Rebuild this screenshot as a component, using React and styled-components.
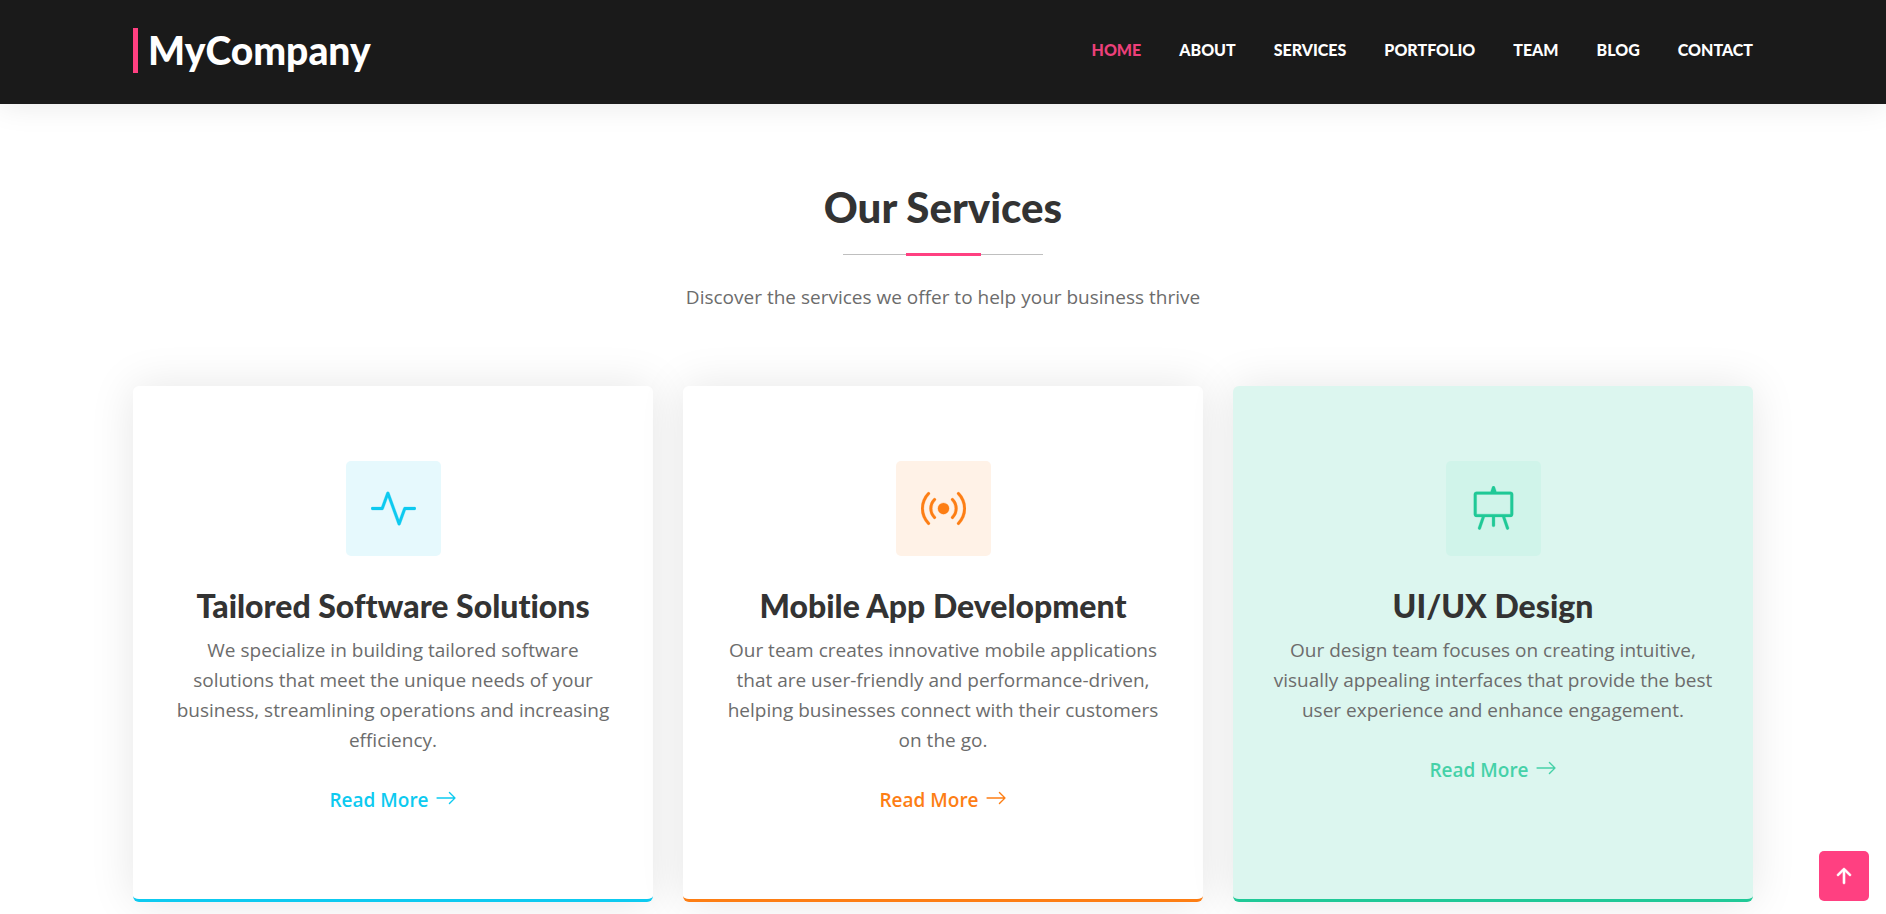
import React from "react"
import styled, { createGlobalStyle } from "styled-components"
import {
  BsActivity,
  BsArrowRight,
  BsArrowUpShort,
  BsBroadcast,
  BsEasel,
} from "react-icons/bs"

const links = ["Home", "About", "Services", "Portfolio", "Team", "Blog", "Contact"]

const services = [
  {
    title: "Tailored Software Solutions",
    text: "We specialize in building tailored software solutions that meet the unique needs of your business, streamlining operations and increasing efficiency.",
    icon: BsActivity,
    color: "#0dcaf0",
    tint: "#e6f9fd",
  },
  {
    title: "Mobile App Development",
    text: "Our team creates innovative mobile applications that are user-friendly and performance-driven, helping businesses connect with their customers on the go.",
    icon: BsBroadcast,
    color: "#fd7e14",
    tint: "#fff2e7",
  },
  {
    title: "UI/UX Design",
    text: "Our design team focuses on creating intuitive, visually appealing interfaces that provide the best user experience and enhance engagement.",
    icon: BsEasel,
    color: "#20c997",
    tint: "#d0f4ea",
    active: true,
  },
]

export default function App() {
  return (
    <>
      <GlobalStyle />
      <Header>
        <HeaderInner>
          <Logo href="#home">MyCompany</Logo>
          <Nav>
            {links.map((name, i) => (
              <NavLink key={name} href={`#${name.toLowerCase()}`} $active={i === 0}>
                {name}
              </NavLink>
            ))}
          </Nav>
        </HeaderInner>
      </Header>
      <Section>
        <SectionTitle>Our Services</SectionTitle>
        <Divider />
        <SectionText>Discover the services we offer to help your business thrive</SectionText>
        <Cards>
          {services.map(({ title, text, icon: Icon, color, tint, active }) => (
            <Card key={title} $color={color} $active={active}>
              <IconBox $color={color} $tint={tint}>
                <Icon />
              </IconBox>
              <CardTitle>{title}</CardTitle>
              <CardText>{text}</CardText>
              <ReadMore href="#services" $color={color} $active={active}>
                Read More <BsArrowRight />
              </ReadMore>
            </Card>
          ))}
        </Cards>
      </Section>
      <ScrollTop type="button" aria-label="Back to top">
        <BsArrowUpShort />
      </ScrollTop>
    </>
  )
}

const GlobalStyle = createGlobalStyle`
  * {
    box-sizing: border-box;
  }

  body {
    margin: 0;
    background: #fff;
    color: #6c6c6c;
    font-family: "Open Sans", sans-serif;
    font-size: 19px;
    line-height: 30px;
    overflow-x: hidden;
  }

  a {
    text-decoration: none;
  }

  h2, h3 {
    font-variant-ligatures: none;
  }
`

const Header = styled.header`
  position: sticky;
  top: 0;
  z-index: 10;
  padding: 28px 0 31px;
  background: #1a1a1a;
  box-shadow: 0 0 30px rgba(0, 0, 0, 0.1);
`

const HeaderInner = styled.div`
  display: flex;
  align-items: flex-start;
  justify-content: space-between;
  width: calc(100% - 48px);
  max-width: 1620px;
  margin: 0 auto;
`

const Logo = styled.a`
  padding-left: 10px;
  border-left: 5px solid #ff4081;
  color: #fff;
  font-family: Lato, sans-serif;
  font-size: 39px;
  font-weight: 900;
  line-height: 45px;
`

const Nav = styled.nav`
  display: flex;
  gap: 38px;
  padding-top: 10px;
`

const NavLink = styled.a`
  color: ${({ $active }) => ($active ? "#ec407a" : "#fff")};
  font-family: Lato, sans-serif;
  font-size: 16px;
  font-weight: 900;
  line-height: 24px;
  text-transform: uppercase;
`

const Section = styled.section`
  width: calc(100% - 48px);
  max-width: 1620px;
  margin: 0 auto;
  padding: 79px 0 12px;
  text-align: center;
`

const SectionTitle = styled.h2`
  margin: 0 0 22px;
  color: #333;
  font-family: Lato, sans-serif;
  font-size: 42px;
  font-weight: 900;
  line-height: 48px;
`

const Divider = styled.div`
  display: flex;
  align-items: center;
  justify-content: center;
  width: 200px;
  height: 3px;
  margin: 0 auto 26px;
  background: linear-gradient(#bfbfbf, #bfbfbf) center / 100% 1px no-repeat;

  &::after {
    content: "";
    width: 75px;
    height: 3px;
    background: #ff4081;
  }
`

const SectionText = styled.p`
  margin: 0 0 74px;
`

const Cards = styled.div`
  display: grid;
  grid-template-columns: repeat(3, 1fr);
  gap: 30px;

  @media (max-width: 1100px) {
    grid-template-columns: 1fr;
  }
`

const Card = styled.article`
  display: flex;
  flex-direction: column;
  align-items: center;
  padding: 75px 40px 84px;
  border-bottom: 3px solid ${({ $color }) => $color};
  border-radius: 6px;
  background: ${({ $active }) => ($active ? "#dcf6ef" : "#fff")};
  box-shadow: 0 0 45px rgba(0, 0, 0, 0.1);
`

const IconBox = styled.div`
  display: flex;
  align-items: center;
  justify-content: center;
  width: 95px;
  height: 95px;
  margin-bottom: 30px;
  border-radius: 5px;
  background: ${({ $tint }) => $tint};
  color: ${({ $color }) => $color};
  font-size: 45px;

  svg {
    stroke: currentColor;
    stroke-width: 0.1;
  }
`

const CardTitle = styled.h3`
  margin: 0 0 10px;
  color: #333;
  font-family: Lato, sans-serif;
  font-size: 32px;
  font-weight: 900;
  line-height: 39px;
`

const CardText = styled.p`
  margin: 0 0 30px;
`

const ReadMore = styled.a`
  display: flex;
  align-items: center;
  gap: 6px;
  color: ${({ $color }) => $color};
  font-weight: 600;
  opacity: ${({ $active }) => ($active ? 0.8 : 1)};

  svg {
    width: 22px;
    height: 22px;
    margin-bottom: 4px;
  }
`

const ScrollTop = styled.button`
  position: fixed;
  right: 17px;
  bottom: 13px;
  z-index: 20;
  display: flex;
  align-items: center;
  justify-content: center;
  width: 50px;
  height: 50px;
  padding: 0;
  border: 0;
  border-radius: 5px;
  background: #ff4081;
  color: #fff;
  font-size: 32px;
  cursor: pointer;

  svg {
    stroke: currentColor;
    stroke-width: 0.3;
  }
`
